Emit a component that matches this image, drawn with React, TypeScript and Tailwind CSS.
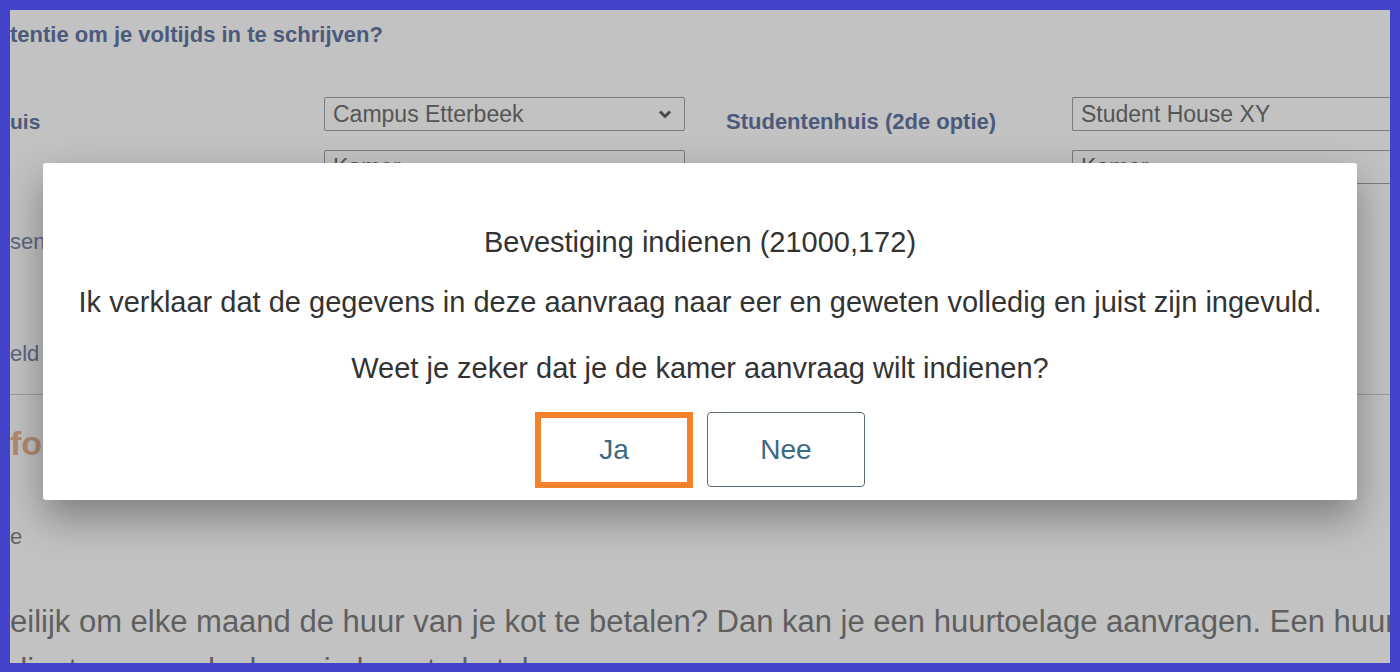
import React from "react";

const ChevronDown = () => (
  <svg width="14" height="10" viewBox="0 0 14 10" className="shrink-0">
    <path d="M2 2.5 L7 7.5 L12 2.5" fill="none" stroke="#4a4a4a" strokeWidth="3" />
  </svg>
);

const SelectBox = ({ value, chevron = true, className = "" }: { value: string; chevron?: boolean; className?: string }) => (
  <div
    className={
      "flex items-center justify-between h-[34px] border border-[#7b7b7b] rounded-[2px] pl-2 pr-3 text-[23px] text-[#555] " +
      className
    }
  >
    <span className="leading-none">{value}</span>
    {chevron && <ChevronDown />}
  </div>
);

const App = () => {
  return (
    <div
      className="h-[672px] w-[1400px] overflow-hidden border-t-[10px] border-l-[10px] border-r-[10px] border-b-[9px] border-[#4343c9] bg-[#4343c9]"
      style={{ fontFamily: '"Liberation Sans", Arial, sans-serif' }}
    >
      <div className="relative h-full w-full overflow-hidden bg-[#c2c2c2]">
        {/* PAGE BEHIND THE DIALOG */}
        <div className="flex flex-col">
          <div className="h-[50px] pt-[14px] text-[22px] font-bold text-[#4b5a7c] leading-[22px] whitespace-nowrap">
            tentie om je voltijds in te schrijven?
          </div>

          {/* form rows */}
          <div className="mt-[37px] grid grid-cols-[314px_361px_41px_346px_380px] grid-rows-[34px_34px] gap-y-[19px]">
            <div className="h-[34px] pt-[12px] text-[21px] leading-[26px] font-bold text-[#4b5a7c]">uis</div>
            <SelectBox value="Campus Etterbeek" />
            <div />
            <div className="h-[34px] pt-[12px] text-[22px] leading-[26px] font-bold text-[#4b5a7c] whitespace-nowrap">
              Studentenhuis (2de optie)
            </div>
            <SelectBox value="Student House XY" chevron={false} className="border-r-0" />

            <div />
            <SelectBox value="Kamer" chevron={false} />
            <div />
            <div />
            <SelectBox value="Kamer" chevron={false} className="border-r-0" />
          </div>

          <div className="mt-[44px] text-[22px] leading-[28px] text-[#5a6580]">sen</div>
          <div className="mt-[84px] text-[22px] leading-[28px] text-[#5a6580]">eld</div>
          <div className="mt-[26px] border-t border-[#9c9c9c]" />
          <div className="mt-[30px] text-[34px] font-bold leading-[36px] text-[#b08a70]">fo</div>
          <div className="mt-[62px] text-[22px] leading-[28px] text-[#666]">e</div>
          <div className="mt-[54px] whitespace-nowrap text-[31px] leading-[34px] text-[#5f5f5f]">
            eilijk om elke maand de huur van je kot te betalen? Dan kan je een huurtoelage aanvragen. Een huurtoelage
          </div>
          <div className="mt-[14px] whitespace-nowrap text-[31px] leading-[34px] text-[#5f5f5f]">
            dient om een deel van je huur te betalen.
          </div>
        </div>

        {/* DIALOG */}
        <div className="absolute left-[33px] top-[153px] flex h-[337px] w-[1314px] flex-col items-center rounded-[3px] bg-white pt-[62px] text-[#333] shadow-[0_18px_40px_rgba(0,0,0,0.35)]">
          <p className="whitespace-nowrap text-[29px] leading-[34px]">Bevestiging indienen (21000,172)</p>
          <p className="mt-[26px] whitespace-nowrap text-[29px] leading-[34px]">
            Ik verklaar dat de gegevens in deze aanvraag naar eer en geweten volledig en juist zijn ingevuld.
          </p>
          <p className="mt-[32px] whitespace-nowrap text-[29px] leading-[34px]">
            Weet je zeker dat je de kamer aanvraag wilt indienen?
          </p>
          <div className="mt-[27px] flex gap-[14px]">
            <button className="flex h-[76px] w-[158px] items-center justify-center border-[6px] border-[#f5822a] bg-white text-[28px] text-[#3b6a84]">
              Ja
            </button>
            <button className="flex h-[75px] w-[158px] items-center justify-center rounded-[4px] border border-[#5b6b75] bg-white text-[28px] text-[#3b6a84]">
              Nee
            </button>
          </div>
        </div>
      </div>
    </div>
  );
};

export default App;
